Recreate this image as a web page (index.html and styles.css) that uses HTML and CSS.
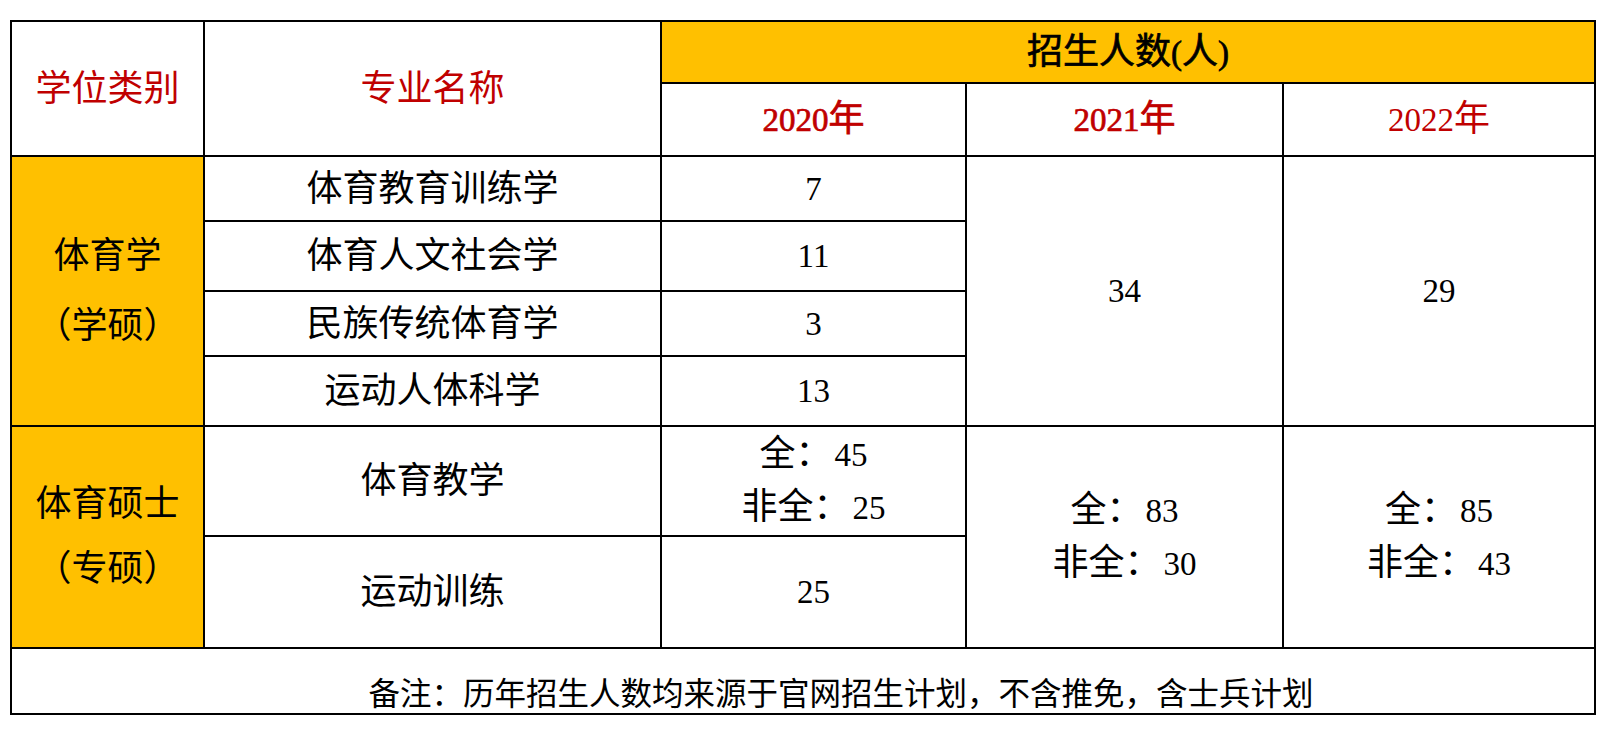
FILE: index.html
```html
<!DOCTYPE html>
<html lang="zh-CN">
<head>
<meta charset="utf-8">
<title>招生人数</title>
<link rel="stylesheet" href="styles.css">
</head>
<body>
<table class="grid">
  <colgroup>
    <col class="c1"><col class="c2"><col class="c3"><col class="c4"><col class="c5">
  </colgroup>
  <tr class="r-top">
    <td rowspan="2" class="head red">学位类别</td>
    <td rowspan="2" class="head red">专业名称</td>
    <td colspan="3" class="gold bold">招生人数<span class="n">(</span>人<span class="n">)</span></td>
  </tr>
  <tr class="r-year">
    <td class="red bold"><span class="n">2020</span>年</td>
    <td class="red bold"><span class="n">2021</span>年</td>
    <td class="red"><span class="n">2022</span>年</td>
  </tr>
  <tr class="r-a">
    <td rowspan="4" class="gold cat"><div>体育学</div><div>（学硕）</div></td>
    <td>体育教育训练学</td>
    <td class="n">7</td>
    <td rowspan="4" class="n">34</td>
    <td rowspan="4" class="n">29</td>
  </tr>
  <tr class="r-b">
    <td>体育人文社会学</td>
    <td class="n">11</td>
  </tr>
  <tr class="r-c">
    <td>民族传统体育学</td>
    <td class="n">3</td>
  </tr>
  <tr class="r-d">
    <td>运动人体科学</td>
    <td class="n">13</td>
  </tr>
  <tr class="r-e">
    <td rowspan="2" class="gold cat2"><div>体育硕士</div><div>（专硕）</div></td>
    <td>体育教学</td>
    <td class="two"><div>全：<span class="n gap">45</span></div><div>非全：<span class="n gap">25</span></div></td>
    <td rowspan="2" class="two"><div>全：<span class="n gap">83</span></div><div>非全：<span class="n gap">30</span></div></td>
    <td rowspan="2" class="two"><div>全：<span class="n gap">85</span></div><div>非全：<span class="n gap">43</span></div></td>
  </tr>
  <tr class="r-f">
    <td>运动训练</td>
    <td class="n">25</td>
  </tr>
  <tr class="r-g">
    <td colspan="5" class="note">备注：历年招生人数均来源于官网招生计划，不含推免，含士兵计划</td>
  </tr>
</table>
</body>
</html>
```
FILE: styles.css
```css
html, body {
  margin: 0;
  padding: 0;
  background: #ffffff;
}
body {
  padding: 20px 0 0 10px;
}
.grid {
  border-collapse: collapse;
  table-layout: fixed;
  width: 1586px;
  font-family: "Liberation Serif", "Noto Sans CJK SC", serif;
  font-size: 36px;
  color: #000;
}
.c1 { width: 193px; }
.c2 { width: 457px; }
.c3 { width: 305px; }
.c4 { width: 317px; }
.c5 { width: 312px; }
.grid td {
  border: 2px solid #000;
  padding: 0;
  text-align: center;
  vertical-align: middle;
  line-height: 40px;
}
.grid .n {
  font-family: "Liberation Serif", serif;
  font-size: 33px;
}
.gap { margin-left: 3px; }
.r-top { height: 62px; }
.r-year { height: 73px; }
.r-a { height: 65px; }
.r-b { height: 70px; }
.r-c { height: 65px; }
.r-d { height: 70px; }
.r-e { height: 110px; }
.r-f { height: 112px; }
.r-g { height: 66px; }
.red { color: #c00000; }
.bold { -webkit-text-stroke: 0.7px currentColor; }
.gold { background: #ffc000; }
.cat div { line-height: 70px; }
.cat2 div { line-height: 65px; }
.two div { line-height: 52px; }
.grid .note {
  font-size: 31.5px;
  line-height: 32px;
  padding: 28px 0 0 76px;
}
```
